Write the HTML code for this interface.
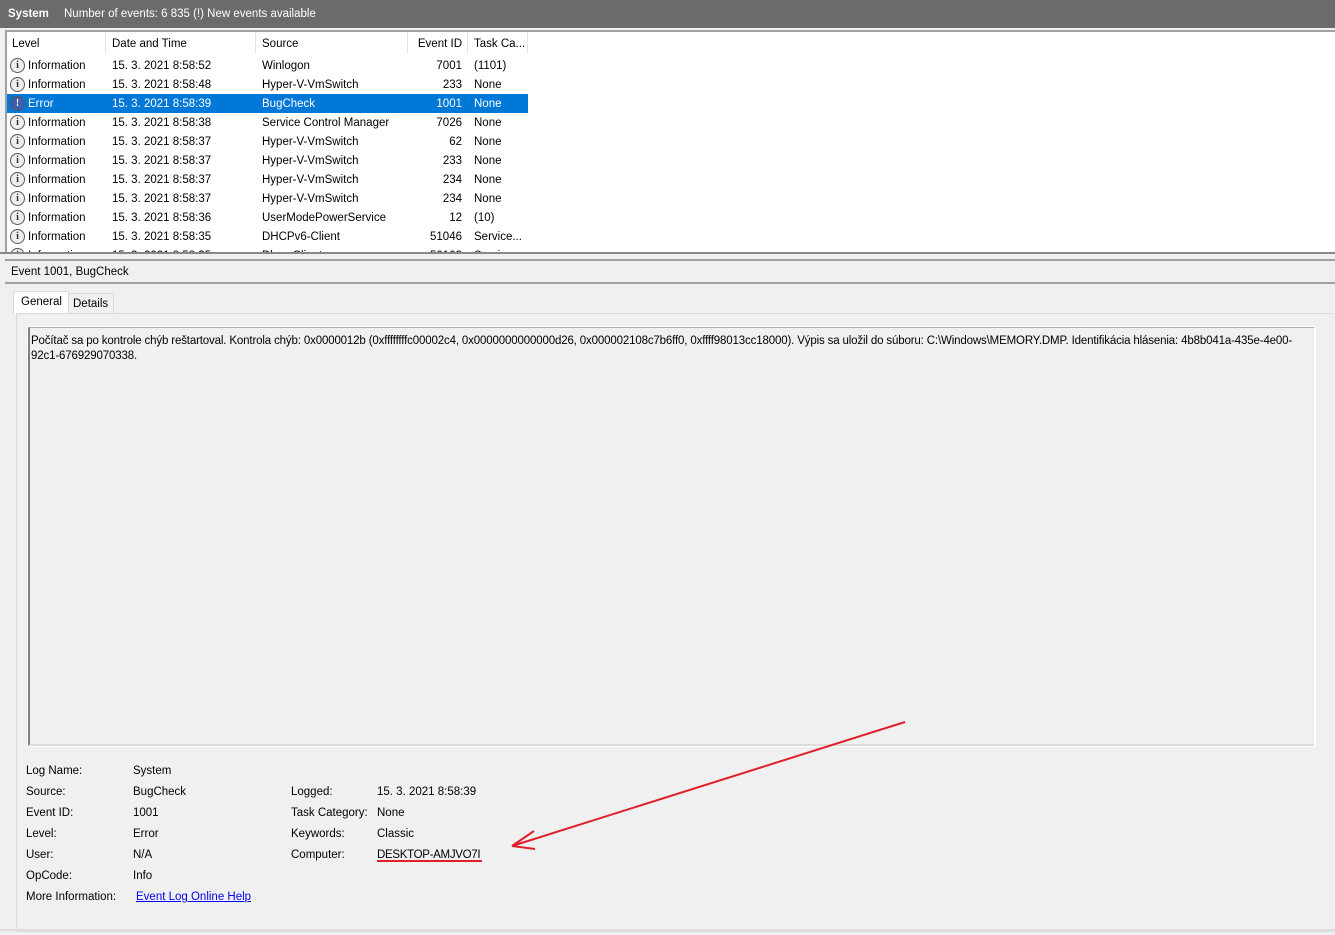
<!DOCTYPE html><html><head><style>
body{margin:0;width:1335px;height:935px;background:#f0f0f0;font-family:"Liberation Sans",sans-serif;font-size:11.5px;color:#000;position:relative;overflow:hidden}
.a{position:absolute;white-space:nowrap}
.title{left:0;top:0;width:1335px;height:28px;background:#6b6b6b;color:#fff}
.list{left:5px;top:30px;width:1330px;height:222px;background:#fff;border-left:2px solid #a0a0a0;border-top:2px solid #a0a0a0;overflow:hidden}
.row{position:absolute;left:0;height:19px;width:521px;line-height:20px}
.row span{position:absolute}
.sel{background:#0078d7;color:#fff}
.ic{position:absolute;left:3px;top:2px;width:13px;height:13px;border:1px solid #555;border-radius:50%;background:#eee;font:bold 10px "Liberation Serif",serif;text-align:center;line-height:13px;color:#333}
.hd{position:absolute;top:0;height:22px;line-height:24px;border-right:1px solid #e5e5e5}
</style></head><body>
<div class="a title"><span class="a" style="left:8px;top:8px;font-weight:bold">System</span><span class="a" style="left:64px;top:8px">Number of events: 6 835 (!) New events available</span></div>
<div class="a list">
<div class="hd" style="left:0;width:98px"><span style="padding-left:5px">Level</span></div>
<div class="hd" style="left:99px;width:149px"><span style="padding-left:6px">Date and Time</span></div>
<div class="hd" style="left:249px;width:151px"><span style="padding-left:6px">Source</span></div>
<div class="hd" style="left:401px;width:59px;text-align:right"><span style="padding-right:5px">Event ID</span></div>
<div class="hd" style="left:461px;width:59px"><span style="padding-left:6px">Task Ca...</span></div>
<div id="rows"></div>
</div>
<div class="a" style="left:0;top:252px;width:1335px;height:2px;background:#888"></div>
<div class="a" style="left:5px;top:259px;width:1330px;height:2px;background:#a0a0a0"></div>
<div class="a" style="left:11px;top:266px">Event 1001, BugCheck</div>
<div class="a" style="left:5px;top:282px;width:1330px;height:2px;background:#a0a0a0"></div>
<div class="a" style="left:13px;top:291px;width:54px;height:22px;background:#fff;border:1px solid #d9d9d9;border-bottom:none"><span class="a" style="left:7px;top:4px">General</span></div>
<div class="a" style="left:68px;top:293px;width:44px;height:19px;background:#f0f0f0;border:1px solid #d9d9d9;border-bottom:none"><span class="a" style="left:4px;top:4px">Details</span></div>
<div class="a" style="left:16px;top:313px;width:1316px;height:617px;border:1px solid #d9d9d9;border-right:none"></div>
<div class="a" style="left:28px;top:327px;width:1284px;height:416px;border:1px solid #b0b0b0;border-left:2px solid #808080;border-right:1px solid #fff;border-bottom:2px solid #dcdcdc;outline:1px solid #fff"></div>
<div class="a" style="left:31px;top:334px;line-height:15px;white-space:normal;width:1262px;letter-spacing:-0.15px">Počítač sa po kontrole chýb reštartoval. Kontrola chýb: 0x0000012b (0xffffffffc00002c4, 0x0000000000000d26, 0x000002108c7b6ff0, 0xffff98013cc18000). Výpis sa uložil do súboru: C:\Windows\MEMORY.DMP. Identifikácia hlásenia: 4b8b041a-435e-4e00-92c1-676929070338.</div>
<div class="a" style="left:26px;top:761px;line-height:21px">Log Name:<br>Source:<br>Event ID:<br>Level:<br>User:<br>OpCode:<br>More Information:</div>
<div class="a" style="left:133px;top:761px;line-height:21px">System<br>BugCheck<br>1001<br>Error<br>N/A<br>Info</div>
<div class="a" style="left:136px;top:887px;line-height:21px;color:#0000ee;text-decoration:underline">Event Log Online Help</div>
<div class="a" style="left:291px;top:782px;line-height:21px">Logged:<br>Task Category:<br>Keywords:<br>Computer:</div>
<div class="a" style="left:377px;top:782px;line-height:21px">15. 3. 2021 8:58:39<br>None<br>Classic<br><span style="letter-spacing:-0.3px">DESKTOP-AMJVO7I</span></div>
<div class="a" style="left:377px;top:860px;width:105px;height:2px;background:#e0202a"></div>
<svg class="a" style="left:0;top:0" width="1335" height="935"><path d="M905 722 L512 846 M512 846 L534 831 M512 846 L535 849" stroke="#e0202a" stroke-width="2" fill="none"/></svg>
<div class="a" style="left:0;top:929px;width:1335px;height:2px;background:#ddd"></div>
<script>
var d=[["Information","15. 3. 2021 8:58:52","Winlogon","7001","(1101)"],["Information","15. 3. 2021 8:58:48","Hyper-V-VmSwitch","233","None"],["Error","15. 3. 2021 8:58:39","BugCheck","1001","None"],["Information","15. 3. 2021 8:58:38","Service Control Manager","7026","None"],["Information","15. 3. 2021 8:58:37","Hyper-V-VmSwitch","62","None"],["Information","15. 3. 2021 8:58:37","Hyper-V-VmSwitch","233","None"],["Information","15. 3. 2021 8:58:37","Hyper-V-VmSwitch","234","None"],["Information","15. 3. 2021 8:58:37","Hyper-V-VmSwitch","234","None"],["Information","15. 3. 2021 8:58:36","UserModePowerService","12","(10)"],["Information","15. 3. 2021 8:58:35","DHCPv6-Client","51046","Service..."],["Information","15. 3. 2021 8:58:35","Dhcp-Client","50103","Service..."]];
var h="";d.forEach(function(r,i){var e=r[0]=="Error";h+='<div class="row'+(e?' sel':'')+'" style="top:'+(24+i*19)+'px"><div class="ic" style="'+(e?'background:#3a5fb0;color:#fff':'')+'">'+(e?'!':'i')+'</div><span style="left:21px">'+r[0]+'</span><span style="left:105px">'+r[1]+'</span><span style="left:255px">'+r[2]+'</span><span style="right:66px">'+r[3]+'</span><span style="left:467px">'+r[4]+'</span></div>'});
document.getElementById("rows").innerHTML=h;
</script>
</body></html>
